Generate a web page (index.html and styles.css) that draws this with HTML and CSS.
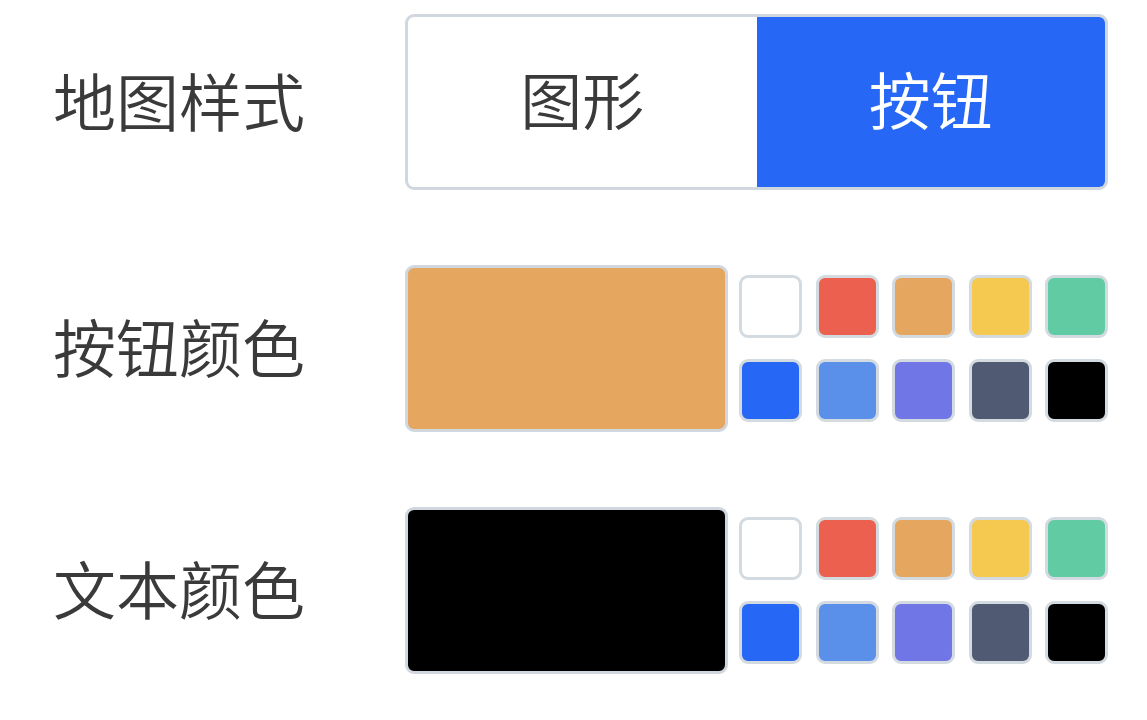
FILE: index.html
```html
<!DOCTYPE html>
<html lang="zh-CN">
<head>
  <meta charset="UTF-8">
  <meta name="viewport" content="width=device-width, initial-scale=1.0">
  <title>地图设置</title>
  <link rel="stylesheet" href="styles.css">
</head>
<body>
  <div class="settings">
    <div class="label">地图样式</div>
    <div class="segmented">
      <div class="segment">图形</div>
      <div class="segment active">按钮</div>
    </div>

    <div class="label">按钮颜色</div>
    <div class="picker">
      <div class="preview orange"></div>
      <div class="palette">
        <span class="swatch white"></span>
        <span class="swatch red"></span>
        <span class="swatch orange"></span>
        <span class="swatch yellow"></span>
        <span class="swatch green"></span>
        <span class="swatch blue"></span>
        <span class="swatch sky"></span>
        <span class="swatch purple"></span>
        <span class="swatch slate"></span>
        <span class="swatch black"></span>
      </div>
    </div>

    <div class="label">文本颜色</div>
    <div class="picker">
      <div class="preview black"></div>
      <div class="palette">
        <span class="swatch white"></span>
        <span class="swatch red"></span>
        <span class="swatch orange"></span>
        <span class="swatch yellow"></span>
        <span class="swatch green"></span>
        <span class="swatch blue"></span>
        <span class="swatch sky"></span>
        <span class="swatch purple"></span>
        <span class="swatch slate"></span>
        <span class="swatch black"></span>
      </div>
    </div>
  </div>
</body>
</html>
```

FILE: styles.css
```css
* {
  margin: 0;
  padding: 0;
  box-sizing: border-box;
}

body {
  font-family: "Noto Sans CJK SC", "Noto Sans", sans-serif;
  font-weight: 350;
  background: #fff;
  color: #3a3a3a;
  padding: 14px 39px 0 53px;
}

.settings {
  display: grid;
  grid-template-columns: 352px 703px;
  row-gap: 75px;
  align-items: center;
}

.label {
  font-size: 63px;
  line-height: 1;
  padding-bottom: 8px;
}

/* segmented control */
.segmented {
  display: flex;
  height: 176px;
  border: 3px solid #d0d7de;
  border-radius: 9px;
  overflow: hidden;
}

.segment {
  flex: 1;
  display: flex;
  align-items: center;
  justify-content: center;
  font-size: 62px;
  padding-bottom: 8px;
  color: #3a3a3a;
}

.segment.active {
  background: #2767f6;
  color: #fff;
}

/* colour pickers */
.picker {
  display: flex;
  align-items: center;
  gap: 11px;
}

.preview {
  width: 323px;
  height: 167px;
  border: 3px solid #d0d7de;
  border-radius: 9px;
}

.palette {
  flex: 1;
  display: grid;
  grid-template-columns: repeat(5, 63px);
  justify-content: space-between;
  row-gap: 21px;
}

.swatch {
  display: block;
  width: 63px;
  height: 63px;
  border: 3px solid #d3dae0;
  border-radius: 9px;
}

.white { background: #fff; }
.red { background: #ec6050; }
.orange { background: #e5a65f; }
.yellow { background: #f5c84f; }
.green { background: #61cba4; }
.blue { background: #2767f6; }
.sky { background: #5b90ea; }
.purple { background: #7176e6; }
.slate { background: #515a73; }
.black { background: #000; }
```
